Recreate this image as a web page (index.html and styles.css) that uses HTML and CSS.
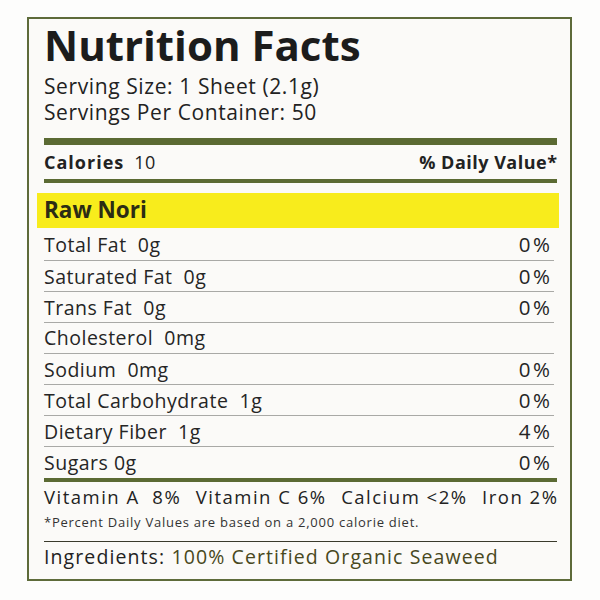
FILE: index.html
```html
<!DOCTYPE html>
<html lang="en">
<head>
<meta charset="utf-8">
<title>Nutrition Facts</title>
<link rel="stylesheet" href="styles.css">
</head>
<body>
<div class="label">
  <h1 class="title">Nutrition Facts</h1>
  <p class="serving serving-first">Serving Size: 1 Sheet (2.1g)</p>
  <p class="serving">Servings Per Container: 50</p>
  <div class="bar bar-thick"></div>
  <div class="calories">
    <span><b>Calories</b><span class="cal-num">10</span></span>
    <span class="dv">% Daily Value*</span>
  </div>
  <div class="bar bar-mid"></div>
  <div class="product">Raw Nori</div>
  <ul class="rows">
    <li class="row"><span>Total Fat&nbsp; 0g</span><span class="pct">0%</span></li>
    <li class="row"><span>Saturated Fat&nbsp; 0g</span><span class="pct">0%</span></li>
    <li class="row"><span>Trans Fat&nbsp; 0g</span><span class="pct">0%</span></li>
    <li class="row"><span>Cholesterol&nbsp; 0mg</span><span class="pct"></span></li>
    <li class="row"><span>Sodium&nbsp; 0mg</span><span class="pct">0%</span></li>
    <li class="row"><span>Total Carbohydrate&nbsp; 1g</span><span class="pct">0%</span></li>
    <li class="row"><span>Dietary Fiber&nbsp; 1g</span><span class="pct">4%</span></li>
    <li class="row"><span>Sugars 0g</span><span class="pct">0%</span></li>
  </ul>
  <div class="bar bar-thin"></div>
  <div class="vitamins">
    <span>Vitamin A&nbsp; 8%</span>
    <span>Vitamin C 6%</span>
    <span>Calcium &lt;2%</span>
    <span>Iron 2%</span>
  </div>
  <p class="footnote">*Percent Daily Values are based on a 2,000 calorie diet.</p>
  <div class="rule"></div>
  <p class="ingredients">Ingredients: <span class="ing-value">100% Certified Organic Seaweed</span></p>
</div>
</body>
</html>
```
FILE: styles.css
```css
* {
  box-sizing: border-box;
}
html, body {
  margin: 0;
  padding: 0;
  background: #fdfdfc;
}
body {
  font-family: "Open Sans", Lato, sans-serif;
  color: #222;
  width: 600px;
  height: 600px;
  overflow: hidden;
}
.label {
  margin: 17px 0 0 27px;
  border: 2px solid #5e6b3a;
  background: #fbfaf8;
  padding: 3.5px 13px 0 15px;
  width: 545px;
  height: 564px;
}
.title {
  margin: 0;
  font-size: 42px;
  line-height: 44px;
  font-weight: 700;
  color: #1c1c1c;
}
.serving {
  margin: 0;
  font-size: 21px;
  line-height: 26.5px;
  letter-spacing: 0.6px;
  color: #222;
}
.serving-first {
  margin-top: 6px;
}
.bar {
  background: #5b6a33;
}
.bar-thick {
  height: 7px;
  margin-top: 12px;
}
.calories {
  display: flex;
  justify-content: space-between;
  align-items: baseline;
  font-size: 18px;
  line-height: 34px;
  height: 34px;
}
.calories b {
  font-weight: 700;
  letter-spacing: 1px;
}
.cal-num {
  margin-left: 10px;
  font-weight: 400;
  letter-spacing: 0.5px;
}
.dv {
  font-weight: 700;
  letter-spacing: 0.5px;
  margin-right: -0.5px;
}
.bar-mid {
  height: 4px;
}
.product {
  margin: 10px -2px 0 -7px;
  padding-left: 7px;
  height: 35px;
  background: #f8ec1c;
  font-size: 22.5px;
  font-weight: 700;
  line-height: 33px;
  color: #2c2c14;
}
.rows {
  list-style: none;
  margin: 0;
  padding: 0;
}
.row {
  display: flex;
  justify-content: space-between;
  align-items: baseline;
  height: 31px;
  line-height: 30px;
  font-size: 19.5px;
  letter-spacing: 0.5px;
  margin-right: 3px;
  padding-right: 1.5px;
  border-bottom: 1px solid #a9a9a6;
  color: #252525;
}
.row:first-child {
  height: 33px;
  line-height: 32px;
}
.row:last-child {
  border-bottom: none;
  line-height: 31px;
}
.pct {
  font-size: 20.5px;
  letter-spacing: 2.5px;
}
.bar-thin {
  height: 4px;
}
.vitamins {
  display: flex;
  justify-content: space-between;
  font-size: 18.5px;
  line-height: 30px;
  letter-spacing: 1.5px;
  margin-right: -1.5px;
  color: #222;
}
.footnote {
  margin: 0;
  font-size: 13px;
  line-height: 20px;
  letter-spacing: 0.75px;
  color: #333;
}
.rule {
  height: 1.5px;
  background: #3a3a2c;
  margin-top: 9px;
}
.ingredients {
  margin: 0;
  font-size: 19.5px;
  line-height: 30px;
  letter-spacing: 1.1px;
  color: #222;
}
.ing-value {
  color: #484820;
}
```
